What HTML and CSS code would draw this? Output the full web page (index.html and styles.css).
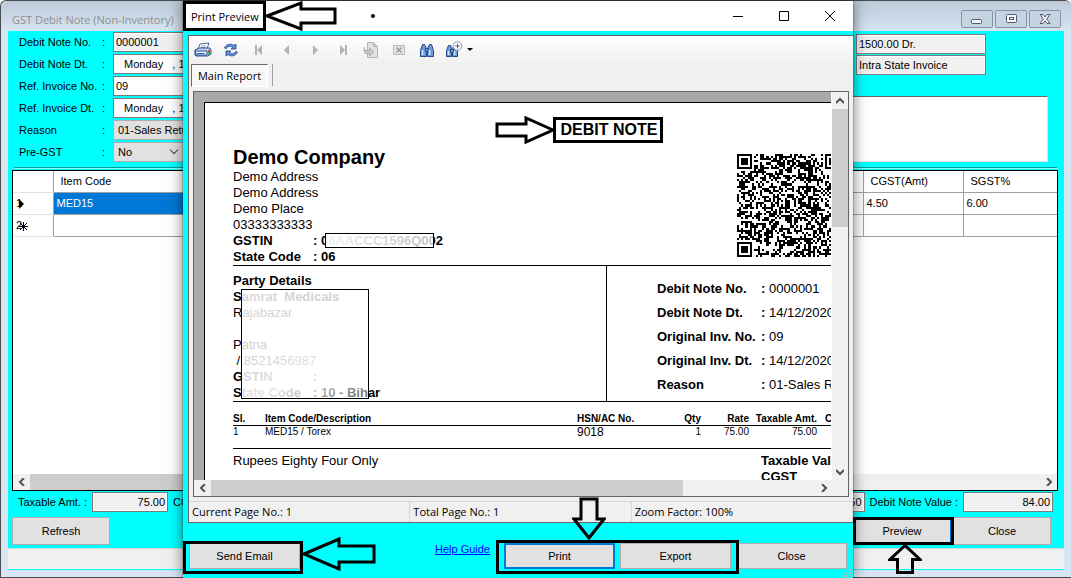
FILE: index.html
```html
<!DOCTYPE html>
<html lang="en">
  <head>
    <meta charset="utf-8">
    <title>GST Debit Note (Non-Inventory)</title>
    <link rel="stylesheet" href="styles.css">
  </head>
  <body>
    <div class="window">
      <header class="window-title">
        <h1>GST Debit Note (Non-Inventory)</h1>
        <div class="window-controls">
          <button aria-label="Minimize"><svg width="14" height="12" viewBox="0 0 14 12"><rect x="1.500" y="6.500" width="10" height="4" rx="1"/></svg></button>
          <button aria-label="Restore"><svg width="14" height="12" viewBox="0 0 14 12"><rect x="2.500" y="1.500" width="10" height="8" rx="1"/><rect x="5.500" y="4.500" width="4" height="2"/></svg></button>
          <button aria-label="Close window"><svg width="14" height="12" viewBox="0 0 14 12"><path d="M2 1.500h3l2 2.500 2-2.500h3l-3.300 4.500 3.300 4.500h-3l-2-2.500-2 2.500h-3l3.300-4.500z"/></svg></button>
        </div>
      </header>

      <main class="client">
        <div class="form-top">
          <div class="form-left">
            <label for="note-no">Debit Note No. <span>:</span></label>
            <input id="note-no" class="readonly" type="text" value="0000001" readonly>
            <label for="note-dt">Debit Note Dt. <span>:</span></label>
            <input id="note-dt" class="date" type="text" value="Monday   , 14 December">
            <label for="inv-no">Ref. Invoice No. <span>:</span></label>
            <input id="inv-no" type="text" value="09">
            <label for="inv-dt">Ref. Invoice Dt. <span>:</span></label>
            <input id="inv-dt" class="date" type="text" value="Monday   , 14 December">
            <label for="reason">Reason <span>:</span></label>
            <div class="select"><select id="reason"><option>01-Sales Return</option></select></div>
            <label for="pre-gst">Pre-GST <span>:</span></label>
            <div class="select short"><select id="pre-gst"><option>No</option><option>Yes</option></select></div>
          </div>
          <div class="form-right">
            <input class="readonly" type="text" aria-label="Balance" value="1500.00 Dr." readonly>
            <input class="readonly" type="text" aria-label="Invoice type" value="Intra State Invoice" readonly>
            <textarea aria-label="Remarks"></textarea>
          </div>
        </div>
        <hr>

        <div class="items">
          <table>
            <thead>
              <tr><th class="row-no"></th><th class="item-code">Item Code</th><th></th><th class="amt">CGST(Amt)</th><th class="rate">SGST%</th></tr>
            </thead>
            <tbody>
              <tr>
                <td class="row-no">1<svg width="6" height="10" viewBox="0 0 6 10"><path d="M0 0l5 5-5 5z"/></svg></td>
                <td class="selected">MED15</td><td></td><td>4.50</td><td>6.00</td>
              </tr>
              <tr>
                <td class="row-no">2<svg class="star" width="9" height="9" viewBox="0 0 9 9"><path d="M4.500 0v9M0 4.500h9M1 1l7 7M8 1l-7 7"/></svg></td>
                <td></td><td></td><td></td><td></td>
              </tr>
            </tbody>
          </table>
          <div class="scroll-h">
            <button aria-label="Scroll left"><svg width="8" height="8" viewBox="0 0 8 8"><path d="M6 0L2 4l4 4"/></svg></button>
            <div class="thumb"></div>
            <button aria-label="Scroll right"><svg width="8" height="8" viewBox="0 0 8 8"><path d="M2 0l4 4-4 4"/></svg></button>
          </div>
        </div>

        <div class="totals">
          <label for="taxable">Taxable Amt. :</label>
          <input id="taxable" class="readonly" type="text" value="75.00" readonly>
          <label for="cgst">CGST Amt. :</label>
          <input id="cgst" class="readonly last" type="text" value="4.50" readonly>
          <label for="value">Debit Note Value :</label>
          <input id="value" class="readonly value" type="text" value="84.00" readonly>
        </div>

        <div class="actions">
          <button class="btn">Refresh</button>
          <div class="marked mark-preview">
            <button class="btn default">Preview</button>
            <svg class="arrow arrow-up" width="34" height="31" viewBox="0 0 34 31"><path d="M17 1.500L2 15.500h7.500v13h15v-13H32z"/></svg>
          </div>
          <button class="btn">Close</button>
        </div>
        <div class="strip"></div>
      </main>
    </div>

    <section class="dialog">
      <header class="dialog-title">
        <div class="marked mark-title">
          <h2>Print Preview</h2>
          <svg class="arrow arrow-title" width="72" height="30" viewBox="0 0 72 30"><path d="M2 15L36 2v6h34v14H36v6z"/></svg>
        </div>
        <span class="dot"></span>
        <div class="dialog-controls">
          <button aria-label="Minimize preview"><svg width="12" height="12" viewBox="0 0 12 12"><path d="M1 6.500h10"/></svg></button>
          <button aria-label="Maximize preview"><svg width="12" height="12" viewBox="0 0 12 12"><path d="M1.500 1.500h9v9h-9z"/></svg></button>
          <button aria-label="Close preview"><svg width="12" height="12" viewBox="0 0 12 12"><path d="M1 1l10 10M11 1L1 11"/></svg></button>
        </div>
      </header>

      <div class="viewer">
        <div class="toolbar">
          <button aria-label="Print report">
            <svg width="18" height="16" viewBox="0 0 18 16"><path d="M6 2l9-1-2 6H4z" fill="#fff" stroke="#4a6aa8"/><path d="M7 4h5M6.500 5.500h5" stroke="#8fa6cc"/><path d="M1 8l4-2h11l1 2v4l-3 2H2l-1-1z" fill="#c3d2ee" stroke="#2f4f93"/><path d="M1 9h12v4H2z" fill="#eef4ff" stroke="#2f4f93"/><path d="M2.500 11.500h8" stroke="#2b63c4"/><path d="M14 8h2v2h-2z" fill="#e23b2e"/><path d="M14 10h2v3h-2z" fill="#2fb54a"/></svg>
          </button>
          <button aria-label="Refresh report">
            <svg width="16" height="16" viewBox="0 0 16 16" fill="#5e8fdb" stroke="#1f4590" stroke-width=".8"><path d="M1.500 6C3 2 8 1 11 3.500L13 2v5H8l1.600-1.700C7.500 3.800 4.500 4 3.500 6.500z"/><path d="M14.500 10c-1.500 4-6.500 5-9.500 2.500L3 14V9h5l-1.600 1.700c2.100 1.500 5.100 1.300 6.100-1.200z"/></svg>
          </button>
          <button aria-label="First page"><svg width="10" height="10" viewBox="0 0 10 10" fill="#b2b2b2"><path d="M1 0h2v10H1zM8 0v10L3 5z"/></svg></button>
          <button aria-label="Previous page"><svg width="10" height="10" viewBox="0 0 10 10" fill="#b2b2b2"><path d="M7 0v10L2 5z"/></svg></button>
          <button aria-label="Next page"><svg width="10" height="10" viewBox="0 0 10 10" fill="#b2b2b2"><path d="M3 0v10l5-5z"/></svg></button>
          <button aria-label="Last page"><svg width="10" height="10" viewBox="0 0 10 10" fill="#b2b2b2"><path d="M2 0v10l5-5zM7 0h2v10H7z"/></svg></button>
          <button aria-label="Go to page"><svg width="16" height="16" viewBox="0 0 16 16"><path d="M4.500.5h6l4 4v11h-10z" fill="#e2e2e2" stroke="#b4b4b4"/><path d="M10.500.5v4h4" fill="#c9c9c9" stroke="#b4b4b4"/><path d="M1.500 5v3.500h5V6l4.500 4-4.500 4v-2.500H3C1 11.500.5 8 1.500 5z" fill="#c8c8c8" stroke="#a4a4a4" stroke-width=".8"/></svg></button>
          <button aria-label="Close view"><svg width="12" height="12" viewBox="0 0 12 12"><path d="M.5 1.500h11v9H.5z" fill="#e4e4e4" stroke="#b8b8b8"/><path d="M3.500 3.500l5 5M8.500 3.500l-5 5" stroke="#999" stroke-width="1.500"/></svg></button>
          <button aria-label="Find text">
            <svg width="14" height="14" viewBox="0 0 14 14" fill="#6f9ad6" stroke="#1f4a8c"><path d="M2.500 1.500h2l2 4v8h-6v-6zM9.500 1.500h2l2 6v6h-6v-8z"/><path d="M5.500 5.500h3v3h-3z"/><path d="M2.500 7v5M9.500 7v5" stroke="#dce8fa" stroke-width="1.500"/></svg>
          </button>
          <button aria-label="Zoom" class="zoom">
            <svg width="18" height="18" viewBox="0 0 18 18" fill="#6f9ad6" stroke="#1f4a8c"><path d="M3.500 4.500h2l1 3v8h-5v-6zM9.500 4.500h1l2 5v6h-5v-8z"/><path d="M5.500 8.500h3v3h-3z"/><path d="M3.500 10v4M9.500 10v4" stroke="#dce8fa" stroke-width="1.500"/><circle cx="12.500" cy="5" r="4.300" fill="#fff" stroke="#8790b5"/><path d="M12.500 2.500v5M10 5h5" stroke="#5361a5"/></svg>
            <svg width="6" height="4" viewBox="0 0 6 4"><path d="M0 0h6L3 3z"/></svg>
          </button>
        </div>
        <div class="tabs"><button class="tab">Main Report</button></div>

        <div class="report-frame">
          <div class="report-area">
            <article class="page">
              <div class="report-title">
                <div class="marked mark-note">
                  <h3>DEBIT NOTE</h3>
                  <svg class="arrow arrow-note" width="60" height="28" viewBox="0 0 60 28"><path d="M58 14L31 2v6H2v12h29v6z"/></svg>
                </div>
              </div>
              <div class="company">
                <div>
                  <h4>Demo Company</h4>
                  <p>Demo Address</p>
                  <p>Demo Address</p>
                  <p>Demo Place</p>
                  <p>03333333333</p>
                  <p class="pair"><span>GSTIN</span><span class="gstin">: 06AACCC1596Q002</span></p>
                  <p class="pair"><span>State Code</span><span>: 06</span></p>
                </div>
                <svg id="qr" class="qr" viewBox="0 0 49 49" shape-rendering="crispEdges"></svg>
              </div>
              <div class="details">
                <div class="party">
                  <p class="strong">Party Details</p>
                  <div class="party-text">
                    <p class="strong">Samrat&nbsp; Medicals</p>
                    <p>Rajabazar</p>
                    <p>&nbsp;</p>
                    <p>Patna</p>
                    <p>&nbsp;/ 8521456987</p>
                    <p class="pair"><span>GSTIN</span><span>:</span></p>
                    <p class="pair"><span>State Code</span><span>: 10 - Bihar</span></p>
                  </div>
                </div>
                <dl class="note">
                  <dt>Debit Note No.</dt><dd><b>:</b> 0000001</dd>
                  <dt>Debit Note Dt.</dt><dd><b>:</b> 14/12/2020</dd>
                  <dt>Original Inv. No.</dt><dd><b>:</b> 09</dd>
                  <dt>Original Inv. Dt.</dt><dd><b>:</b> 14/12/2020</dd>
                  <dt>Reason</dt><dd><b>:</b> 01-Sales Return</dd>
                </dl>
              </div>
              <table class="lines">
                <thead>
                  <tr><th class="c-sl">Sl.</th><th class="c-item">Item Code/Description</th><th class="c-hsn">HSN/AC No.</th><th class="c-qty">Qty</th><th class="c-rate">Rate</th><th class="c-tax">Taxable Amt.</th><th class="c-gst">CGST%</th></tr>
                </thead>
                <tbody>
                  <tr><td>1</td><td>MED15 / Torex</td><td class="hsn">9018</td><td class="num">1</td><td class="num">75.00</td><td class="num">75.00</td><td></td></tr>
                </tbody>
              </table>
              <div class="summary">
                <p>Rupees Eighty Four Only</p>
                <div><p class="strong">Taxable Value</p><p class="strong">CGST</p></div>
              </div>
            </article>
          </div>
          <div class="scroll-v">
            <button aria-label="Scroll up"><svg width="8" height="8" viewBox="0 0 8 8"><path d="M0 6l4-4 4 4"/></svg></button>
            <div class="thumb"></div>
            <button aria-label="Scroll down"><svg width="8" height="8" viewBox="0 0 8 8"><path d="M0 2l4 4 4-4"/></svg></button>
          </div>
          <div class="scroll-h">
            <button aria-label="Scroll report left"><svg width="8" height="8" viewBox="0 0 8 8"><path d="M6 0L2 4l4 4"/></svg></button>
            <div class="thumb"></div>
            <button aria-label="Scroll report right"><svg width="8" height="8" viewBox="0 0 8 8"><path d="M2 0l4 4-4 4"/></svg></button>
          </div>
        </div>
        <div class="status">
          <span>Current Page No.: 1</span>
          <span>Total Page No.: 1</span>
          <span>Zoom Factor: 100%</span>
        </div>
      </div>

      <footer class="dialog-actions">
        <div class="marked mark-email">
          <button class="btn">Send Email</button>
          <svg class="arrow arrow-email" width="74" height="34" viewBox="0 0 74 34"><path d="M2 17L37 2v7h35v16H37v7z"/></svg>
        </div>
        <a href="#">Help Guide</a>
        <div class="marked mark-print">
          <button class="btn focus">Print</button>
          <button class="btn">Export</button>
          <svg class="arrow arrow-down" width="34" height="44" viewBox="0 0 34 44"><path d="M17 41L2 22h7V2h16v20h7z"/></svg>
        </div>
        <button class="btn">Close</button>
        <svg class="grip" width="9" height="9" viewBox="0 0 9 9"><path d="M6 0h2v2H6zM3 3h2v2H3zM6 3h2v2H6zM0 6h2v2H0zM3 6h2v2H3zM6 6h2v2H6z"/></svg>
      </footer>
    </section>
    <script src="qr.js"></script>
  </body>
</html>
```
FILE: styles.css
```css
*, *::before, *::after {
  box-sizing: border-box;
}
body {
  margin: 0;
  height: 100vh;
  position: relative;
  overflow: hidden;
  font-family: "Liberation Sans", Arial, sans-serif;
  font-size: 11px;
  color: #000;
}
h1, h2, h3, h4, p, dl, dd {
  margin: 0;
}
button, input, select, textarea {
  font: inherit;
  color: inherit;
  margin: 0;
}
svg {
  display: block;
  flex: none;
}

/* main window */
.window {
  height: 100%;
  display: flex;
  flex-direction: column;
  background: #d7e4f2;
  border: 1px solid #4a4a4f;
  border-right: 0;
  border-radius: 6px 6px 0 0;
  padding: 0 7px;
}
.window-title {
  height: 30px;
  margin: 0 -7px;
  padding: 0 10px 0 11px;
  display: flex;
  align-items: center;
  justify-content: space-between;
  background: linear-gradient(#bccad9, #d7e4f2);
  border-radius: 6px 6px 0 0;
}
.window-title h1 {
  padding-top: 6px;
  font: 11px "Open Sans", sans-serif;
  color: #8f8f8f;
}
.window-controls {
  display: flex;
  gap: 2px;
  padding-top: 5px;
}
.window-controls button {
  width: 32px;
  height: 18px;
  padding: 0;
  display: flex;
  align-items: center;
  justify-content: center;
  background: #c5d3e3;
  border: 1px solid #8492ab;
  border-radius: 2px;
}
.window-controls svg {
  fill: #f4f6f9;
  stroke: #55586a;
}
.client {
  flex: 1;
  display: flex;
  flex-direction: column;
  min-height: 0;
  margin-bottom: 7px;
  background: #0ff;
}
.form-top {
  display: flex;
  justify-content: space-between;
  padding: 1px 16px 5px 11px;
}
.form-left {
  display: grid;
  grid-template-columns: 94px 180px;
  gap: 2px 0;
}
.form-left label {
  display: flex;
  justify-content: space-between;
  align-items: center;
  padding-right: 8px;
}
input {
  height: 20px;
  min-width: 0;
  padding: 0 2px;
  background: #fff;
  border: 1px solid #7a7a7a;
}
input.readonly {
  background: #f0f0f0;
  box-shadow: inset 0 0 0 1px #fff;
}
input.date {
  padding-left: 10px;
}
.select {
  position: relative;
}
.select select {
  width: 100%;
  height: 20px;
  padding: 0 4px;
  appearance: none;
  background: #e1e1e1;
  border: 1px solid #adadad;
  border-radius: 0;
}
.select.short {
  width: 71px;
}
.select::after {
  content: "";
  position: absolute;
  right: 7px;
  top: 5px;
  width: 6px;
  height: 6px;
  border: solid #444;
  border-width: 0 1px 1px 0;
  transform: rotate(45deg);
}
.form-right {
  width: 400px;
  display: flex;
  flex-direction: column;
  align-items: flex-start;
  gap: 1px;
  padding-top: 2px;
}
.form-right input {
  width: 130px;
  margin-left: 208px;
}
.form-right textarea {
  flex: 1;
  width: 100%;
  min-height: 0;
  margin-top: 20px;
  resize: none;
  background: #fff;
  border: 1px solid #e3e3e3;
  border-top-color: #696969;
}
hr {
  width: calc(100% - 13px);
  height: 2px;
  margin: 0 0 1px 6px;
  border: 0;
  background: #009c9c;
  border-bottom: 1px solid #8ff;
}
.items {
  flex: 1;
  min-height: 0;
  margin: 0 6px 0 4px;
  display: flex;
  flex-direction: column;
  justify-content: space-between;
  background: #fff;
  border: 1px solid #000;
}
.items table {
  width: 100%;
  table-layout: fixed;
  border-collapse: collapse;
}
.items th, .items td {
  height: 22px;
  padding: 0 3px;
  text-align: left;
  font-weight: normal;
  border-right: 1px solid #a0a0a0;
  border-bottom: 1px solid #a0a0a0;
}
.items th {
  height: 21px;
  padding-left: 7px;
}
.items th:last-child, .items td:last-child {
  border-right: 0;
}
.items .row-no {
  width: 40px;
  border-bottom-color: #e2e2e2;
}
.row-no svg {
  display: inline-block;
  vertical-align: middle;
  margin-left: -3px;
}
.row-no .star {
  stroke: #000;
}
.items .item-code {
  width: 180px;
}
.items .amt {
  width: 100px;
}
.items .rate {
  width: 94px;
}
.items td.selected {
  background: #0078d7;
  color: #fff;
}

/* scroll bars */
.scroll-h, .scroll-v {
  display: flex;
  background: #f0f0f0;
}
.scroll-h {
  height: 16px;
}
.scroll-v {
  width: 16px;
  flex-direction: column;
}
.scroll-h button, .scroll-v button {
  width: 17px;
  height: 16px;
  padding: 0;
  display: flex;
  align-items: center;
  justify-content: center;
  background: none;
  border: 0;
}
.scroll-v button {
  width: 16px;
  height: 17px;
}
.scroll-h svg, .scroll-v svg {
  fill: none;
  stroke: #505050;
  stroke-width: 2;
}
.thumb {
  background: #cdcdcd;
}
.items .thumb {
  width: 70%;
}
.scroll-h button:last-child {
  margin-left: auto;
}
.scroll-v button:last-child {
  margin-top: auto;
}

.totals {
  display: flex;
  align-items: center;
  gap: 5px;
  padding: 1px 11px 0 10px;
}
.totals input {
  width: 76px;
  text-align: right;
}
.totals .last {
  margin-left: auto;
}
.totals .value {
  width: 90px;
}
.actions {
  display: flex;
  gap: 2px;
  padding: 5px 13px 3px 4px;
}
.btn {
  width: 98px;
  height: 28px;
  padding: 0;
  background: #e1e1e1;
  border: 1px solid #adadad;
}
.btn.default {
  border: 1px solid #0078d7;
}
.btn.focus {
  border: 2px solid #0078d7;
}
.strip {
  height: 22px;
  background: #f0f0f0;
  border-top: 1px solid #d7d7d7;
  border-bottom: 1px solid #0ff;
}

/* highlighted controls */
.marked {
  position: relative;
}
.marked::after {
  content: "";
  position: absolute;
  inset: 0;
  border: 3px solid #000;
  pointer-events: none;
}
.arrow {
  position: absolute;
  z-index: 1;
  fill: none;
  stroke: #000;
  stroke-width: 3;
}
.mark-preview {
  margin-left: auto;
}
.mark-preview::after {
  inset: 0 -3px 0 0;
}
.arrow-up {
  top: 27px;
  left: 35px;
}

/* print preview dialog */
.dialog {
  position: absolute;
  top: 1px;
  bottom: 0;
  left: 183px;
  right: 218px;
  display: flex;
  flex-direction: column;
  background: #0ff;
  box-shadow: 0 0 14px rgba(0, 0, 0, 0.55), 0 0 1px #000;
}
.dialog-title {
  height: 30px;
  display: flex;
  align-items: center;
  background: #fff;
}
.mark-title {
  width: 83px;
  height: 30px;
  display: flex;
  align-items: center;
  padding-left: 8px;
}
.dialog-title h2 {
  font: 11px "Open Sans", sans-serif;
  white-space: nowrap;
}
.arrow-title {
  left: 82px;
  top: 0;
}
.dot {
  width: 4px;
  height: 4px;
  margin-left: 105px;
  background: #000;
  border-radius: 50%;
}
.dialog-controls {
  display: flex;
  margin-left: auto;
}
.dialog-controls button {
  width: 46px;
  height: 28px;
  padding: 0;
  display: flex;
  align-items: center;
  justify-content: center;
  background: none;
  border: 0;
}
.dialog-controls svg {
  fill: none;
  stroke: #000;
}
.viewer {
  flex: 1;
  min-height: 0;
  margin: 4px 0 0 5px;
  display: flex;
  flex-direction: column;
  background: #f0f0f0;
  border: solid #646464;
  border-width: 1px 0 1px 1px;
}
.toolbar {
  height: 28px;
  display: flex;
  background: linear-gradient(#fdfdfd, #f0f0f0);
}
.toolbar button {
  width: 28px;
  padding: 0;
  display: flex;
  align-items: center;
  justify-content: center;
  background: none;
  border: 0;
}
.toolbar .zoom {
  width: 36px;
  gap: 4px;
}
.tabs {
  height: 27px;
  display: flex;
}
.tab {
  width: 77px;
  height: 23px;
  margin-left: 2px;
  padding: 0;
  font: 11px "Open Sans", sans-serif;
  background: #f8f8f8;
  border: 1px solid #fff;
  border-top-color: #696969;
  border-left-color: #696969;
}
.tabs::after {
  content: "";
  height: 22px;
  margin-left: 4px;
  border-left: 1px solid #a0a0a0;
}
.report-frame {
  flex: 1;
  min-height: 0;
  margin: 0 4px 4px;
  display: grid;
  grid-template-columns: 1fr 16px;
  grid-template-rows: 1fr 16px;
  border: 1px solid #646464;
}
.report-area {
  min-width: 0;
  min-height: 0;
  overflow: hidden;
  padding: 10px 0 0 10px;
  background: #a9a9a9;
  border-right: 1px solid #fff;
}
.page {
  width: 808px;
  padding: 14px 28px;
  background: #fff;
  border: 1px solid #000;
  font-size: 13px;
  line-height: 16px;
}
.report-title {
  display: flex;
  justify-content: center;
}
.mark-note {
  padding: 0 6px 0 8px;
}
.report-title h3 {
  font-size: 16px;
  line-height: 26px;
}
.arrow-note {
  left: -58px;
  top: -1px;
}
.company {
  display: grid;
  grid-template-columns: 504px 103px;
  align-items: start;
  padding-top: 2px;
}
.company h4 {
  font-size: 20px;
  line-height: 24px;
}
.qr {
  width: 103px;
  height: 103px;
  margin-top: 9px;
}
.pair {
  display: grid;
  grid-template-columns: 80px 1fr;
  font-weight: bold;
}
.strong {
  font-weight: bold;
}
.gstin {
  position: relative;
}
.gstin::after {
  content: "";
  position: absolute;
  left: 12px;
  top: 0;
  width: 109px;
  height: 15px;
  background: linear-gradient(90deg, rgba(255, 255, 255, 0.95), rgba(255, 255, 255, 0.75));
  border: 1px solid #000;
}
.details {
  display: grid;
  grid-template-columns: 374px 1fr;
  border-top: 1px solid #000;
  border-bottom: 1px solid #000;
}
.party {
  padding-top: 7px;
  border-right: 1px solid #000;
}
.party-text {
  position: relative;
}
.party-text::after {
  content: "";
  position: absolute;
  left: 8px;
  top: 0;
  width: 128px;
  height: 110px;
  background: linear-gradient(155deg, rgba(255, 255, 255, 0.85), rgba(255, 255, 255, 0.8) 40%, rgba(255, 255, 255, 0.9) 70%, rgba(255, 255, 255, 0.4));
  border: 1px solid #000;
}
.note {
  display: grid;
  grid-template-columns: 104px 1fr;
  align-content: start;
  padding: 11px 0 0 50px;
  line-height: 24px;
}
.note dt {
  font-weight: bold;
}
.lines {
  width: 100%;
  table-layout: fixed;
  border-collapse: collapse;
  font-size: 10px;
  line-height: 12px;
  border-bottom: 1px solid #000;
}
.lines th {
  height: 23px;
  padding: 0;
  text-align: left;
  vertical-align: bottom;
  white-space: nowrap;
  border-bottom: 1px solid #000;
}
.lines td {
  height: 23px;
  padding: 0;
  vertical-align: top;
}
.lines .hsn {
  font-size: 12px;
}
.c-sl {
  width: 32px;
}
.c-item {
  width: 312px;
}
.c-hsn {
  width: 72px;
}
.c-qty {
  width: 52px;
}
.c-rate {
  width: 48px;
}
.c-tax {
  width: 68px;
}
.lines .c-qty, .lines .c-rate, .lines .c-tax, .lines .num {
  text-align: right;
}
.lines .c-gst {
  padding-left: 8px;
}
.summary {
  display: grid;
  grid-template-columns: 528px 1fr;
  padding-top: 4px;
}
.report-frame .scroll-v .thumb {
  height: 118px;
}
.report-frame .scroll-h .thumb {
  width: 74%;
}
.status {
  height: 21px;
  display: grid;
  grid-template-columns: 1fr 1fr 1fr;
  border-top: 1px solid #d7d7d7;
  font: 11px/20px "Open Sans", sans-serif;
}
.status span {
  padding-left: 3px;
  border-right: 1px solid #d7d7d7;
}
.dialog-actions {
  position: relative;
  display: flex;
  gap: 5px;
  padding: 20px 6px 9px;
}
.dialog-actions .btn {
  width: 111px;
  height: 26px;
}
.dialog-actions a {
  margin-left: auto;
  margin-right: 9px;
  color: #00f;
}
.mark-email::after {
  inset: -2px -3px -5px -6px;
}
.arrow-email {
  left: 113px;
  top: -6px;
}
.mark-print {
  display: flex;
  gap: 5px;
}
.mark-print::after {
  inset: -3px -8px -5px;
  z-index: 1;
}
.arrow-down {
  left: 68px;
  top: -46px;
}
.grip {
  position: absolute;
  right: 1px;
  bottom: 0;
  fill: #b8b8b8;
}
```
FILE: qr.js
```javascript
// Draws the QR block of the report as 1x1 modules
var size = 49;
var seed = 20201214;
function next() {
  seed = (seed * 1103515245 + 12345) % 2147483648;
  return seed / 2147483648;
}
function finder(x, y) {
  var m = Math.max(Math.abs(x - 3), Math.abs(y - 3));
  return m === 3 || m <= 1;
}
var d = '';
for (var y = 0; y < size; y++) {
  for (var x = 0; x < size; x++) {
    var on = next() > 0.48;
    if (x < 8 && y < 8) on = x < 7 && y < 7 && finder(x, y);
    if (x > size - 9 && y < 8) on = x > size - 8 && y < 7 && finder(x - size + 7, y);
    if (x < 8 && y > size - 9) on = x < 7 && y > size - 8 && finder(x, y - size + 7);
    if (on) d += 'M' + x + ' ' + y + 'h1v1h-1z';
  }
}
var path = document.createElementNS('http://www.w3.org/2000/svg', 'path');
path.setAttribute('d', d);
document.getElementById('qr').appendChild(path);
```
